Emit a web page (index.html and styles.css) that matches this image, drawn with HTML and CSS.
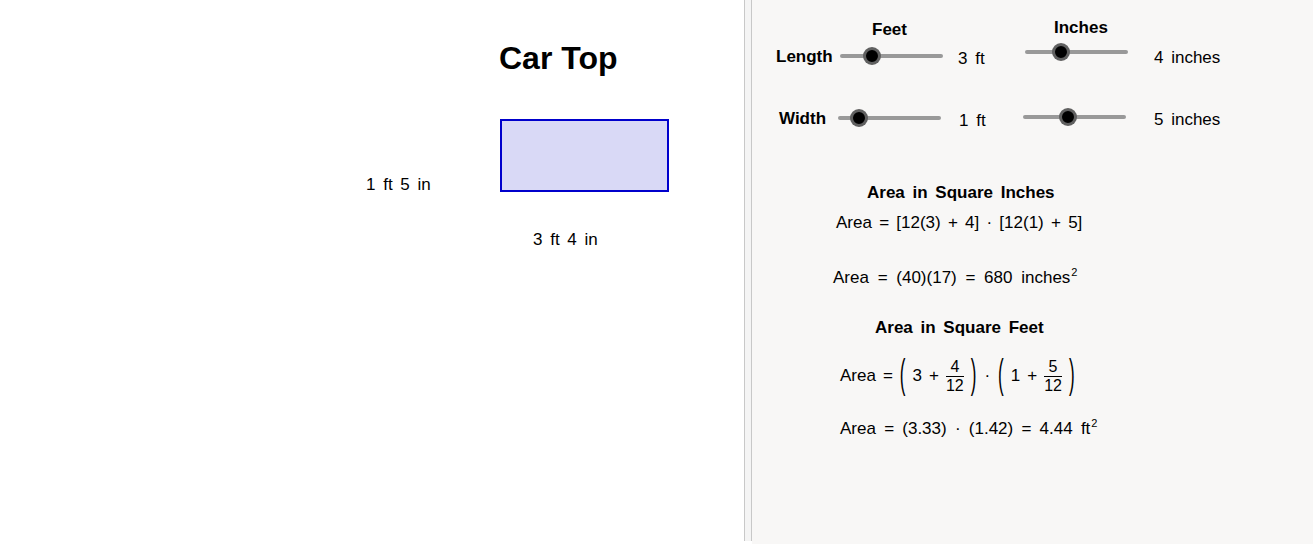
FILE: index.html
```html
<!DOCTYPE html>
<html>
<head>
<meta charset="utf-8">
<link rel="stylesheet" href="styles.css">
</head>
<body>
<div class="app">
  <div class="view view-left">
    <div class="title">Car Top</div>
    <div class="car-rect"></div>
    <div class="txt lbl-width">1 ft 5 in</div>
    <div class="txt lbl-length">3 ft 4 in</div>
  </div>
  <div class="divider"></div>
  <div class="view view-right">
    <div class="bold hdr-feet">Feet</div>
    <div class="bold hdr-inches">Inches</div>

    <div class="bold lbl-len">Length</div>
    <div class="slider s1"><span class="knob"></span></div>
    <div class="txt val-s1">3 ft</div>
    <div class="slider s2"><span class="knob"></span></div>
    <div class="txt val-s2">4 inches</div>

    <div class="bold lbl-wid">Width</div>
    <div class="slider s3"><span class="knob"></span></div>
    <div class="txt val-s3">1 ft</div>
    <div class="slider s4"><span class="knob"></span></div>
    <div class="txt val-s4">5 inches</div>

    <div class="bold hdr-sqin">Area in Square Inches</div>
    <div class="txt eq eq1">Area = [12(3) + 4] · [12(1) + 5]</div>
    <div class="txt eq eq2">Area = (40)(17) = 680 inches<sup>2</sup></div>

    <div class="bold hdr-sqft">Area in Square Feet</div>
    <div class="txt eq eq3">
      <span>Area</span>
      <span>=</span>
      <span class="paren">(</span>
      <span>3</span>
      <span>+</span>
      <span class="frac"><span class="num">4</span><span class="den">12</span></span>
      <span class="paren">)</span>
      <span class="dot">·</span>
      <span class="paren">(</span>
      <span>1</span>
      <span>+</span>
      <span class="frac"><span class="num">5</span><span class="den">12</span></span>
      <span class="paren">)</span>
    </div>
    <div class="txt eq eq4">Area = (3.33) · (1.42) = 4.44 ft<sup>2</sup></div>
  </div>
</div>
</body>
</html>
```

FILE: styles.css
```css
html, body {
  margin: 0;
  padding: 0;
  background: #ffffff;
}
body {
  font-family: "Liberation Sans", Arial, sans-serif;
  color: #000;
}
.app {
  display: flex;
  width: 1313px;
  height: 544px;
  overflow: hidden;
}
.view {
  position: relative;
  height: 544px;
}
.view-left {
  width: 744px;
  background: #ffffff;
}
.divider {
  width: 6px;
  height: 541px;
  background: #f4f4f4;
  border-left: 1px solid #c8c8c8;
  border-right: 1px solid #c8c8c8;
}
.view-right {
  flex: 1;
  background: #f8f7f6;
}

/* canvas objects */
.title, .car-rect, .txt, .bold, .slider {
  position: absolute;
}
.title {
  left: 499px;
  top: 40px;
  font-size: 32px;
  font-weight: bold;
  line-height: 36px;
  white-space: nowrap;
}
.car-rect {
  left: 500px;
  top: 119px;
  width: 169px;
  height: 73px;
  box-sizing: border-box;
  border: 2px solid #0000cc;
  background: #d9d9f6;
}
.txt {
  font-size: 17px;
  line-height: 20px;
  word-spacing: 3px;
  white-space: nowrap;
}
.bold {
  font-size: 17px;
  line-height: 20px;
  font-weight: bold;
  word-spacing: 3px;
  white-space: nowrap;
}
.lbl-width { left: 366px; top: 175px; }
.lbl-length { left: 533px; top: 230px; }

.hdr-feet { left: 120px; top: 20px; }
.hdr-inches { left: 302px; top: 18px; }
.lbl-len { left: 24px; top: 47px; }
.lbl-wid { left: 27px; top: 109px; }
.val-s1 { left: 206px; top: 49px; }
.val-s2 { left: 402px; top: 48px; }
.val-s3 { left: 207px; top: 111px; }
.val-s4 { left: 402px; top: 110px; }

.slider {
  width: 103px;
  height: 4px;
  border-radius: 2px;
  background: #999999;
}
.s1 { left: 88px; top: 54px; }
.s2 { left: 273px; top: 50px; }
.s3 { left: 86px; top: 116px; }
.s4 { left: 271px; top: 115px; }
.knob {
  position: absolute;
  top: -7px;
  width: 12px;
  height: 12px;
  border-radius: 50%;
  background: #000;
  border: 3px solid rgba(120, 120, 120, 0.8);
  box-sizing: content-box;
  margin-left: -9px;
}
.s1 .knob { left: 32px; }
.s2 .knob { left: 36px; }
.s3 .knob { left: 21px; }
.s4 .knob { left: 45px; }

.hdr-sqin { left: 115px; top: 183px; }
.hdr-sqft { left: 123px; top: 318px; }
.eq { word-spacing: 4px; }
.eq1 { left: 84px; top: 213px; word-spacing: 2.5px; }
.eq2 { left: 81px; top: 268px; }
.eq4 { left: 88px; top: 419px; word-spacing: 3.5px; }
.eq sup {
  font-size: 11px;
  vertical-align: 7px;
  line-height: 0;
  margin-left: 1px;
}
.eq3 {
  left: 88px;
  top: 351px;
  height: 50px;
  display: flex;
  align-items: center;
  gap: 7px;
  word-spacing: 0;
}
.paren {
  display: inline-block;
  transform: scaleY(2.4);
  font-weight: 300;
}
.frac {
  display: inline-flex;
  flex-direction: column;
  align-items: center;
  font-size: 16px;
  line-height: 18px;
}
.frac .num {
  padding: 0 2px;
  border-bottom: 1px solid #000;
  align-self: stretch;
  text-align: center;
}
.dot { padding: 0 1px; }
```
